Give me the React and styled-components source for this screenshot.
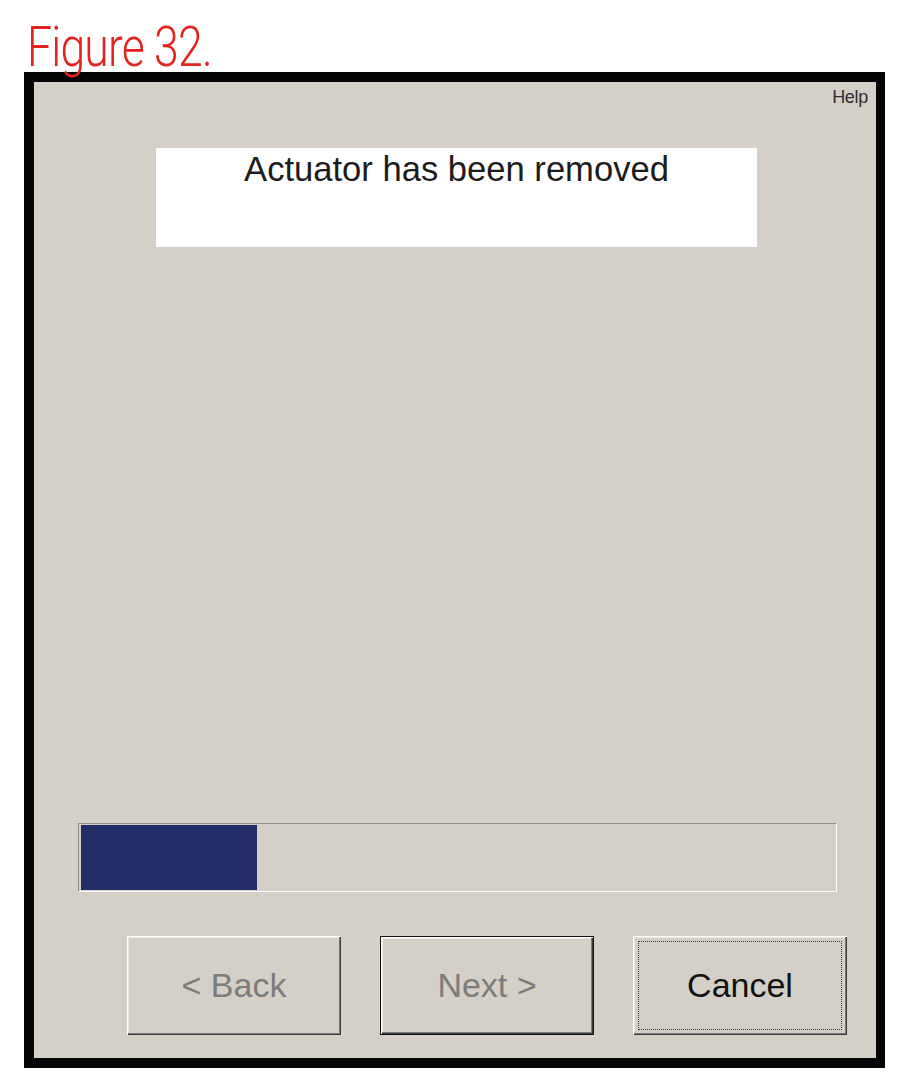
import React from 'react';
import styled, { createGlobalStyle } from 'styled-components';

const GlobalStyle = createGlobalStyle`
  html, body {
    margin: 0;
    padding: 0;
    background: #ffffff;
  }
  body {
    font-family: 'Liberation Sans', Arial, sans-serif;
  }
`;

const Page = styled.div`
  width: 904px;
  height: 1088px;
  box-sizing: border-box;
  padding: 22px 0 0 24px;
`;

const Caption = styled.div`
  height: 50px;
  padding-left: 3px;
`;

const CaptionText = styled.span`
  display: inline-block;
  font-family: Roboto, 'Liberation Sans', sans-serif;
  font-weight: 300;
  font-size: 55px;
  line-height: 50px;
  letter-spacing: -1px;
  color: #e2231f;
  transform: scaleX(0.81);
  transform-origin: left center;
`;

const Frame = styled.div`
  width: 861px;
  height: 996px;
  box-sizing: border-box;
  border: 10px solid #050505;
  border-right-width: 9px;
  background: #d4d0c8;
  display: flex;
  flex-direction: column;
`;

const HelpRow = styled.div`
  display: flex;
  justify-content: flex-end;
  padding: 4px 8px 0 0;
  height: 24px;
`;

const HelpLink = styled.span`
  font-size: 18px;
  line-height: 22px;
  color: #2e2e2e;
  letter-spacing: -0.3px;
`;

const MessageBox = styled.div`
  align-self: center;
  margin: 38px 0 0 3px;
  width: 601px;
  height: 99px;
  box-sizing: border-box;
  background: #ffffff;
  padding-top: 2px;
  text-align: center;
  font-size: 34.6px;
  line-height: 38px;
  color: #1c1c1c;
`;

const Spacer = styled.div`
  flex: 1;
`;

const Trough = styled.div`
  margin: 0 39px 0 44px;
  height: 69px;
  box-sizing: border-box;
  border-top: 1px solid #8c8a84;
  border-left: 1px solid #8c8a84;
  border-bottom: 1px solid #ffffff;
  border-right: 1px solid #ffffff;
  padding: 1px 2px 1px 2px;
  display: flex;
`;

const Fill = styled.div`
  height: 100%;
  background: #232d69;
`;

const ButtonRow = styled.div`
  display: flex;
  gap: 39px;
  margin: 44px 29px 23px 93px;
`;

const Button = styled.button`
  position: relative;
  width: 214px;
  height: 99px;
  box-sizing: border-box;
  background: #d4d0c8;
  font-family: 'Liberation Sans', Arial, sans-serif;
  font-size: 34px;
  padding: 0;
  color: ${p => (p.disabled ? '#7c7c7a' : '#111111')};
  border: ${p => (p.$isDefault ? '1px solid #111' : 'none')};
  box-shadow:
    inset 1px 1px #ffffff,
    inset -1px -1px #3a3a3a,
    inset -2px -2px #7a7a7a,
    inset 2px 2px #ece9e2;
  cursor: default;
`;

const FocusRing = styled.span`
  position: absolute;
  inset: 5px;
  border: 1px dotted #333;
  pointer-events: none;
`;

export default function App() {
  const progress = 0.234;
  return (
    <>
      <GlobalStyle />
      <Page>
        <Caption>
          <CaptionText>Figure 32.</CaptionText>
        </Caption>
        <Frame>
          <HelpRow>
            <HelpLink>Help</HelpLink>
          </HelpRow>
          <MessageBox>Actuator has been removed</MessageBox>
          <Spacer />
          <Trough>
            <Fill style={{ width: `${progress * 100}%` }} />
          </Trough>
          <ButtonRow>
            <Button disabled>&lt; Back</Button>
            <Button disabled $isDefault>Next &gt;</Button>
            <Button>
              <FocusRing />
              Cancel
            </Button>
          </ButtonRow>
        </Frame>
      </Page>
    </>
  );
}
